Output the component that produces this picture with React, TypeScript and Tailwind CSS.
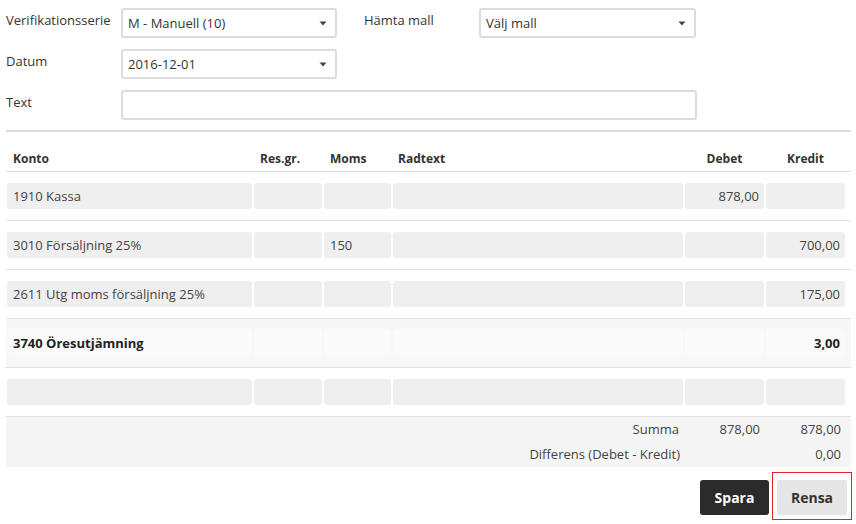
const font = { fontFamily: '"Open Sans", "Liberation Sans", sans-serif' };

type Row = {
  konto: string;
  moms?: string;
  debet?: string;
  kredit?: string;
  bold?: boolean;
};

const rows: Row[] = [
  { konto: "1910 Kassa", debet: "878,00" },
  { konto: "3010 Försäljning 25%", moms: "150", kredit: "700,00" },
  { konto: "2611 Utg moms försäljning 25%", kredit: "175,00" },
  { konto: "3740 Öresutjämning", kredit: "3,00", bold: true },
  { konto: "" },
];

const grid = "grid grid-cols-[245px_68px_67px_290px_79px_79px] gap-x-[2px]";

function Caret() {
  return (
    <svg width="8" height="5" viewBox="0 0 8 5" className="shrink-0">
      <path d="M0.5 0.5 H7.5 L4 4.5 Z" fill="#444" />
    </svg>
  );
}

function Select({ value, w }: { value: string; w: string }) {
  return (
    <div
      className={`${w} h-[30px] flex items-center justify-between pl-[5px] pr-[8px] border-2 border-[#dcdcdc] rounded-[3px] bg-white text-[13px] text-[#333]`}
    >
      <span className="pt-[1px]">{value}</span>
      <Caret />
    </div>
  );
}

export default function App() {
  return (
    <div className="w-[856px] h-[524px] bg-white text-[#333] text-[13px]" style={font}>
      <div className="pl-[6px] pr-[4px] pt-[8px]">
        <div className="flex items-start">
          <label className="w-[115px] pt-[2px] leading-[20px]">Verifikationsserie</label>
          <Select value="M - Manuell (10)" w="w-[216px]" />
          <label className="w-[115px] ml-[27px] pt-[2px] leading-[20px]">Hämta mall</label>
          <Select value="Välj mall" w="w-[217px]" />
        </div>
        <div className="flex items-start mt-[11px]">
          <label className="w-[115px] pt-[2px] leading-[20px]">Datum</label>
          <Select value="2016-12-01" w="w-[216px]" />
        </div>
        <div className="flex items-start mt-[11px]">
          <label className="w-[115px] pt-[2px] leading-[20px]">Text</label>
          <div className="w-[576px] h-[30px] border-2 border-[#dcdcdc] rounded-[3px]" />
        </div>

        <div className="mt-[10px] mr-[1px] h-[2px] bg-[#dadada]" />

        <div className={`${grid} pl-[1px] mr-[1px] h-[40px] items-end pb-[3px] border-b border-[#dcdcdc] text-[12px] font-bold text-[#333] leading-[18px]`}>
          <div className="pl-[6px]">Konto</div>
          <div className="pl-[6px]">Res.gr.</div>
          <div className="pl-[6px]">Moms</div>
          <div className="pl-[5px]">Radtext</div>
          <div className="text-center">Debet</div>
          <div className="text-center">Kredit</div>
        </div>

        {rows.map((r, i) => {
          const cell = r.bold ? "bg-[#fafafa]" : "bg-[#efefef]";
          return (
            <div
              key={i}
              className={`${grid} pl-[1px] mr-[1px] py-[11px] border-b border-[#e2e2e2] ${r.bold ? "bg-[#f7f7f7] font-bold text-[#222]" : "text-[#444]"}`}
            >
              <div className={`${cell} h-[26px] rounded-[3px] pl-[6px] pt-[1px] flex items-center`}>{r.konto}</div>
              <div className={`${cell} h-[26px] rounded-[3px]`} />
              <div className={`${cell} h-[26px] rounded-[3px] pl-[6px] pt-[1px] flex items-center`}>{r.moms}</div>
              <div className={`${cell} h-[26px] rounded-[3px]`} />
              <div className={`${cell} h-[26px] rounded-[3px] pr-[5px] pt-[1px] flex items-center justify-end`}>{r.debet}</div>
              <div className={`${cell} h-[26px] rounded-[3px] pr-[5px] pt-[1px] flex items-center justify-end`}>{r.kredit}</div>
            </div>
          );
        })}

        <div className={`${grid} pl-[1px] mr-[1px] bg-[#f5f5f5] pt-[2px] pb-[2px] text-[#444] leading-[21px]`}>
          <div className="col-span-4 text-right pr-[4px]">Summa</div>
          <div className="text-right pr-[4px]">878,00</div>
          <div className="text-right pr-[4px]">878,00</div>
          <div className="col-span-4 text-right pr-[3px] mt-[4px]">Differens (Debet - Kredit)</div>
          <div />
          <div className="text-right pr-[4px] mt-[4px]">0,00</div>
        </div>

        <div className="flex justify-end items-start mt-[5px]">
          <button className="mt-[8px] w-[69px] h-[35px] rounded-[3px] bg-[#2b2b2b] text-white font-bold text-[14px]">
            Spara
          </button>
          <div className="ml-[3px] border border-[#e3242b] pt-[7px] pb-[4px] px-[4px]">
            <button className="w-[70px] h-[35px] rounded-[3px] bg-[#e6e6e6] text-[#333] font-bold text-[14px]">
              Rensa
            </button>
          </div>
        </div>
      </div>
    </div>
  );
}
